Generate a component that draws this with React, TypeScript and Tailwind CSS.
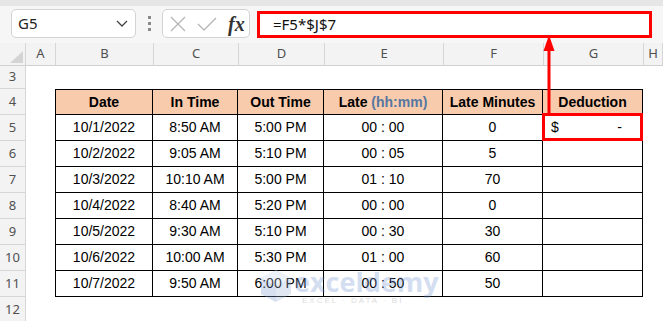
import React from "react";

const rows = [
  ["10/1/2022", "8:50 AM", "5:00 PM", "00 : 00", "0"],
  ["10/2/2022", "9:05 AM", "5:10 PM", "00 : 05", "5"],
  ["10/3/2022", "10:10 AM", "5:00 PM", "01 : 10", "70"],
  ["10/4/2022", "8:40 AM", "5:20 PM", "00 : 00", "0"],
  ["10/5/2022", "9:30 AM", "5:10 PM", "00 : 30", "30"],
  ["10/6/2022", "10:00 AM", "5:30 PM", "01 : 00", "60"],
  ["10/7/2022", "9:50 AM", "6:00 PM", "00 : 50", "50"],
];

const cols = ["A", "B", "C", "D", "E", "F", "G", "H"];
const colW = ["w-[30px]", "w-[98px]", "w-[85px]", "w-[86px]", "w-[119px]", "w-[100px]", "w-[100px]", "flex-1"];

const RowHead = ({ n, h }: { n: number; h: string }) => (
  <div className={`w-[26px] ${h} shrink-0 bg-[#f3f3f3] border-r border-b border-[#d6d6d6] flex items-center justify-center text-[13px] text-[#505050] font-['Noto_Sans',sans-serif]`}>
    {n}
  </div>
);

const Cell = ({ w, children, extra = "" }: { w: string; children?: React.ReactNode; extra?: string }) => (
  <div className={`${w} h-full shrink-0 border-r border-b border-black flex items-center justify-center ${extra}`}>
    {children}
  </div>
);

export default function App() {
  return (
    <div className="w-[663px] h-[321px] overflow-hidden relative bg-white font-['Liberation_Sans',sans-serif]">
      <div className="h-[6px] bg-[#e6e6e6]" />
      {/* formula bar */}
      <div className="h-[37px] bg-[#f6f6f6] flex items-start pt-[3px] pl-[11px]">
        <div className="w-[125px] h-[29px] bg-white border border-[#d3d3d3] rounded-[5px] flex items-center justify-between pl-[6px] pr-[7px]">
          <span className="text-[15px] text-[#222] font-['Noto_Sans',sans-serif]">G5</span>
          <svg width="12" height="7" viewBox="0 0 12 7">
            <path d="M1 1 L6 6 L11 1" fill="none" stroke="#444" strokeWidth="1.3" />
          </svg>
        </div>
        <div className="w-[26px] h-[29px] flex flex-col items-center justify-center gap-[3px]">
          <span className="w-[3px] h-[3px] bg-[#8a8a8a]" />
          <span className="w-[3px] h-[3px] bg-[#8a8a8a]" />
          <span className="w-[3px] h-[3px] bg-[#8a8a8a]" />
        </div>
        <div className="w-[88px] h-[29px] bg-white border border-[#d3d3d3] rounded-[5px] flex items-center pl-[6px] gap-[10px]">
          <svg width="18" height="16" viewBox="0 0 18 16">
            <path d="M2 1 L16 15 M16 1 L2 15" stroke="#b5b5b5" strokeWidth="1.3" />
          </svg>
          <svg width="20" height="16" viewBox="0 0 20 16">
            <path d="M1 8 L7 14 L19 2" fill="none" stroke="#b5b5b5" strokeWidth="1.3" />
          </svg>
          <span className="text-[20px] italic font-bold text-[#333] font-['Liberation_Serif',serif] leading-none ml-[1px]">fx</span>
        </div>
        <div className="ml-[7px] mt-[2px] w-[395px] h-[27px] bg-white border-[3px] border-[#ff0000] flex items-center pl-[13px]">
          <span className="text-[15px] text-[#111] font-['Noto_Sans',sans-serif]">=F5*$J$7</span>
        </div>
      </div>
      {/* column headers */}
      <div className="h-[23px] flex bg-[#f3f3f3] border-b border-[#d0d0d0]">
        <div className="w-[26px] shrink-0 border-r border-[#d6d6d6] relative">
          <svg className="absolute left-[10px] top-[8px]" width="13" height="12" viewBox="0 0 13 12">
            <path d="M13 0 L13 12 L0 12 Z" fill="#d4d4d4" />
          </svg>
        </div>
        {cols.map((c, i) => (
          <div key={c} className={`${colW[i]} shrink-0 border-r border-[#d6d6d6] flex items-center justify-center text-[13px] text-[#505050] font-['Noto_Sans',sans-serif]`}>
            {c}
          </div>
        ))}
      </div>
      {/* row 3 */}
      <div className="flex h-[23px]">
        <RowHead n={3} h="h-[23px]" />
      </div>
      {/* row 4 header */}
      <div className="flex h-[26px]">
        <RowHead n={4} h="h-[26px]" />
        <div className="w-[29px] shrink-0" />
        <div className="flex h-[26px] border-t border-l border-black bg-[#f8cbad] text-[14px] font-bold text-black">
          <Cell w="w-[97px]">Date</Cell>
          <Cell w="w-[85px]">In Time</Cell>
          <Cell w="w-[86px]">Out Time</Cell>
          <Cell w="w-[119px]">
            Late&nbsp;<span className="text-[#5577a0]">(hh:mm)</span>
          </Cell>
          <Cell w="w-[100px]">Late Minutes</Cell>
          <Cell w="w-[100px]">Deduction</Cell>
        </div>
      </div>
      {rows.map((r, idx) => (
        <div key={idx} className="flex h-[26px]">
          <RowHead n={idx + 5} h="h-[26px]" />
          <div className="w-[29px] shrink-0" />
          <div className="flex h-[26px] border-l border-black text-[14px] text-black">
            <Cell w="w-[97px]">{r[0]}</Cell>
            <Cell w="w-[85px]">{r[1]}</Cell>
            <Cell w="w-[86px]">{r[2]}</Cell>
            <Cell w="w-[119px]">{r[3]}</Cell>
            <Cell w="w-[100px]">{r[4]}</Cell>
            <Cell w="w-[100px]" extra="!justify-between px-[8px]">
              {idx === 0 && (
                <>
                  <span>$</span>
                  <span className="mr-[12px]">-</span>
                </>
              )}
            </Cell>
          </div>
        </div>
      ))}
      <div className="flex h-[26px]">
        <RowHead n={12} h="h-[26px]" />
      </div>

      {/* highlight box on G5 */}
      <div className="absolute left-[542px] top-[113px] w-[101px] h-[28px] border-[3px] border-[#ff0000]" />
      {/* arrow */}
      <svg className="absolute left-[540px] top-[34px]" width="20" height="82" viewBox="0 0 20 82">
        <path d="M9 12 L9 80" stroke="#ff0000" strokeWidth="3" />
        <path d="M9 1 L3.5 17 L14.5 17 Z" fill="#ff0000" />
      </svg>

      {/* watermark */}
      <div className="absolute left-[259px] top-[268px] flex items-start opacity-30 pointer-events-none">
        <svg width="34" height="36" viewBox="0 0 34 36">
          <path d="M17 2 L32 10 L32 26 L17 34 L2 26 L2 10 Z" fill="#9db5dc" />
          <path d="M17 2 L32 10 L17 18 L2 10 Z" fill="#c5d5ee" />
          <path d="M17 18 L17 34 L2 26 L2 10 Z" fill="#7e9ccf" />
        </svg>
        <div className="flex flex-col ml-[1px]">
          <span className="text-[27px] font-bold leading-[28px] text-[#6f93d2] font-['Open_Sans',sans-serif]">exceldemy</span>
          <span className="text-[8px] tracking-[2px] text-[#8a8a8a] leading-[10px] ml-[8px]">EXCEL · DATA · BI</span>
        </div>
      </div>
    </div>
  );
}
